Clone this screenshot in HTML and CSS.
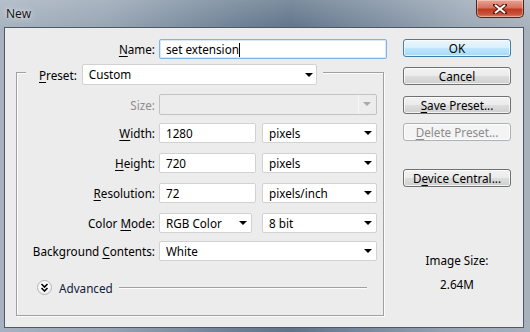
FILE: index.html
```html
<!DOCTYPE html>
<html lang="en">
<head>
    <meta charset="UTF-8">
    <title>New</title>
    <link rel="stylesheet" href="styles.css">
</head>
<body>
    <div class="window">
        <div class="titlebar">
            <span class="title">New</span>
            <button class="close" type="button" aria-label="Close">
                <svg width="14" height="10" viewBox="0 0 14 10">
                    <path d="M2 1 L12 9 M12 1 L2 9" stroke="#5b1a12" stroke-width="4" stroke-linecap="square"/>
                    <path d="M2 1 L12 9 M12 1 L2 9" stroke="#fff" stroke-width="2"/>
                </svg>
            </button>
        </div>

        <div class="client">
            <div class="main">
                <div class="row name-row">
                    <label class="lbl"><u>N</u>ame:</label>
                    <div class="field input focus">set extension<span class="caret"></span></div>
                </div>

                <div class="group">
                    <div class="group-head">
                        <label class="lbl"><u>P</u>reset:</label>
                        <div class="field select preset">Custom<span class="arrow"></span></div>
                    </div>

                    <div class="row size-row">
                        <label class="lbl disabled">Size:</label>
                        <div class="field select off wide"><span class="arrow"></span></div>
                    </div>
                    <div class="row gap10">
                        <label class="lbl"><u>W</u>idth:</label>
                        <div class="pair">
                            <div class="field input num">1280</div>
                            <div class="field select unit">pixels<span class="arrow"></span></div>
                        </div>
                    </div>
                    <div class="row gap10">
                        <label class="lbl"><u>H</u>eight:</label>
                        <div class="pair">
                            <div class="field input num">720</div>
                            <div class="field select unit">pixels<span class="arrow"></span></div>
                        </div>
                    </div>
                    <div class="row gap10">
                        <label class="lbl"><u>R</u>esolution:</label>
                        <div class="pair">
                            <div class="field input num">72</div>
                            <div class="field select unit">pixels/inch<span class="arrow"></span></div>
                        </div>
                    </div>
                    <div class="row gap10">
                        <label class="lbl">Color <u>M</u>ode:</label>
                        <div class="pair">
                            <div class="field select mode">RGB Color<span class="arrow"></span></div>
                            <div class="field select unit">8 bit<span class="arrow"></span></div>
                        </div>
                    </div>
                    <div class="row gap8">
                        <label class="lbl">Background <u>C</u>ontents:</label>
                        <div class="field select wide">White<span class="arrow"></span></div>
                    </div>

                    <div class="advanced">
                        <span class="adv-icon">
                            <svg width="9" height="9" viewBox="0 0 9 9">
                                <path d="M1.5 1 L4.5 4 L7.5 1 M1.5 5 L4.5 8 L7.5 5" fill="none" stroke="#000" stroke-width="1.6"/>
                            </svg>
                        </span>
                        <span class="adv-text">Advanced</span>
                        <span class="adv-line"></span>
                    </div>
                </div>
            </div>

            <div class="side">
                <button class="btn default" type="button">OK</button>
                <button class="btn cancel" type="button">Cancel</button>
                <button class="btn save" type="button"><u>S</u>ave Preset...</button>
                <button class="btn delete" type="button" disabled><u>D</u>elete Preset...</button>
                <button class="btn device" type="button">D<u>e</u>vice Central...</button>

                <div class="image-size">
                    <p>Image Size:</p>
                    <p>2.64M</p>
                </div>
            </div>
        </div>
    </div>
</body>
</html>
```

FILE: styles.css
```css
/* Base */
body {
    margin: 0;
    font-family: "Noto Sans", "Open Sans", sans-serif;
    font-size: 11.7px;
    color: #000;
    background: #6f8498;
}

u {
    text-decoration: underline;
    text-underline-offset: 2px;
}

/* Aero window frame */
.window {
    width: 530px;
    height: 332px;
    box-sizing: border-box;
    padding: 0 6px 4px 4px;
    display: flex;
    flex-direction: column;
    background:
        linear-gradient(180deg, rgba(255,255,255,0.18), rgba(255,255,255,0) 30px),
        linear-gradient(90deg, #a6b2bf 0%, #96a4b3 20%, #6b7f93 45%, #5f7489 55%, #7d8ea0 72%, #9ba8b6 88%, #a7b1bc 100%);
}

.titlebar {
    height: 27px;
    display: flex;
    justify-content: space-between;
    align-items: flex-start;
}

.title {
    margin: 5px 0 0 2px;
    font-size: 12px;
    color: #151515;
    text-shadow: 0 0 6px rgba(255,255,255,0.8), 0 0 2px rgba(255,255,255,0.6);
}

.close {
    width: 48px;
    height: 18px;
    margin: 0;
    padding: 0;
    border: 1px solid #4b2620;
    border-top: none;
    border-radius: 0 0 5px 5px;
    background: linear-gradient(180deg, #e8a493 0%, #d6715d 45%, #c0391f 55%, #c9553c 85%, #dd8a6c 100%);
    box-shadow: inset 0 0 0 1px rgba(255,255,255,0.35);
    display: flex;
    align-items: center;
    justify-content: center;
}

/* Dialog client area */
.client {
    height: 301px;
    box-sizing: border-box;
    border: 1px solid #4e5965;
    background: #ececec;
    display: flex;
}

.main {
    width: 398px;
}

.row {
    display: grid;
    grid-template-columns: 138px auto;
    column-gap: 4px;
    align-items: center;
}

.name-row {
    grid-template-columns: 150px auto;
    margin-top: 11px;
}

.lbl {
    text-align: right;
    white-space: nowrap;
}

.lbl.disabled {
    color: #8d8d8d;
}

/* Inputs and dropdowns */
.field {
    position: relative;
    box-sizing: border-box;
    height: 20px;
    line-height: 18px;
    padding: 0 6px;
    background: #fff;
    border: 1px solid #d2d2d2;
    border-radius: 2px;
    white-space: nowrap;
}

.field.focus {
    width: 228px;
    border-color: #7eb4ea;
    box-shadow: inset 0 0 0 1px #d8e8f8;
}

.caret {
    display: inline-block;
    width: 1px;
    height: 14px;
    background: #000;
    vertical-align: -3px;
}

.arrow {
    position: absolute;
    right: 4px;
    top: 7px;
    border-left: 4px solid transparent;
    border-right: 4px solid transparent;
    border-top: 4px solid #000;
}

.select.off {
    background: #ececec;
    border-color: #c2c2c2;
}

.select.off .arrow {
    border-top-color: #a9a9a9;
    right: 5px;
}

.select.off::after {
    content: "";
    position: absolute;
    right: 17px;
    top: 0;
    bottom: 0;
    border-left: 1px solid #f7f7f7;
}

.wide {
    width: 218px;
}

.pair {
    display: flex;
    gap: 6px;
}

.num {
    width: 97px;
}

.mode {
    width: 93px;
    margin-right: 4px;
}

.unit {
    width: 115px;
}

/* Preset group box */
.group {
    margin: 13px 0 0 11px;
    width: 368px;
    height: 244px;
    box-sizing: border-box;
    border: 1px solid #a0a0a0;
    box-shadow: inset 1px 1px #fcfcfc, 1px 1px #fcfcfc;
}

.group-head {
    display: flex;
    align-items: center;
    width: fit-content;
    margin: -9px 0 0 9px;
    padding: 0 6px 0 13px;
    background: #ececec;
    gap: 5px;
}

.group-head .field {
    height: 21px;
    line-height: 19px;
}

.preset {
    width: 235px;
}

.preset .arrow {
    right: 3px;
    top: 8px;
}

.size-row {
    margin-top: 9px;
}

.size-row .field {
    height: 21px;
    width: 218px;
}

.gap10 {
    margin-top: 8px;
}

.gap10 + .gap10 {
    margin-top: 10px;
}

.gap8 {
    margin-top: 8px;
}

/* Advanced toggle */
.advanced {
    display: flex;
    align-items: center;
    margin: 19px 16px 0 20px;
    height: 15px;
}

.adv-icon {
    width: 15px;
    height: 15px;
    box-sizing: border-box;
    border: 1px solid #b5b5b5;
    border-radius: 50%;
    background: radial-gradient(circle at 50% 35%, #ffffff 30%, #e4e4e4 100%);
    display: flex;
    align-items: center;
    justify-content: center;
}

.adv-text {
    margin-left: 7px;
    color: #10203a;
}

.adv-line {
    flex: 1;
    margin-left: 6px;
    border-top: 1px solid #a0a0a0;
    border-bottom: 1px solid #fcfcfc;
}

/* Right-hand buttons */
.side {
    width: 108px;
    display: flex;
    flex-direction: column;
}

.btn {
    box-sizing: border-box;
    height: 18px;
    padding: 0;
    font-family: inherit;
    font-size: 11.7px;
    line-height: 15px;
    color: #000;
    border: 1px solid #707070;
    border-radius: 3px;
    background: linear-gradient(180deg, #f2f2f2 0%, #ebebeb 48%, #dddddd 52%, #cfcfcf 100%);
    box-shadow: inset 0 0 0 1px rgba(255,255,255,0.7);
}

.btn.default {
    margin-top: 11px;
    border-color: #3c7fb1;
    background: linear-gradient(180deg, #eaf6fd 0%, #d9f0fc 48%, #bee6fd 52%, #a7d9f5 100%);
}

.btn.cancel {
    margin-top: 10px;
}

.btn.save {
    margin-top: 11px;
}

.btn.delete {
    margin-top: 9px;
    color: #8c8c8c;
    border-color: #adb2b5;
    background: #f4f4f4;
}

.btn.device {
    margin-top: 28px;
}

.image-size {
    margin-top: 65px;
    text-align: center;
}

.image-size p {
    margin: 0 0 8px;
}
```
